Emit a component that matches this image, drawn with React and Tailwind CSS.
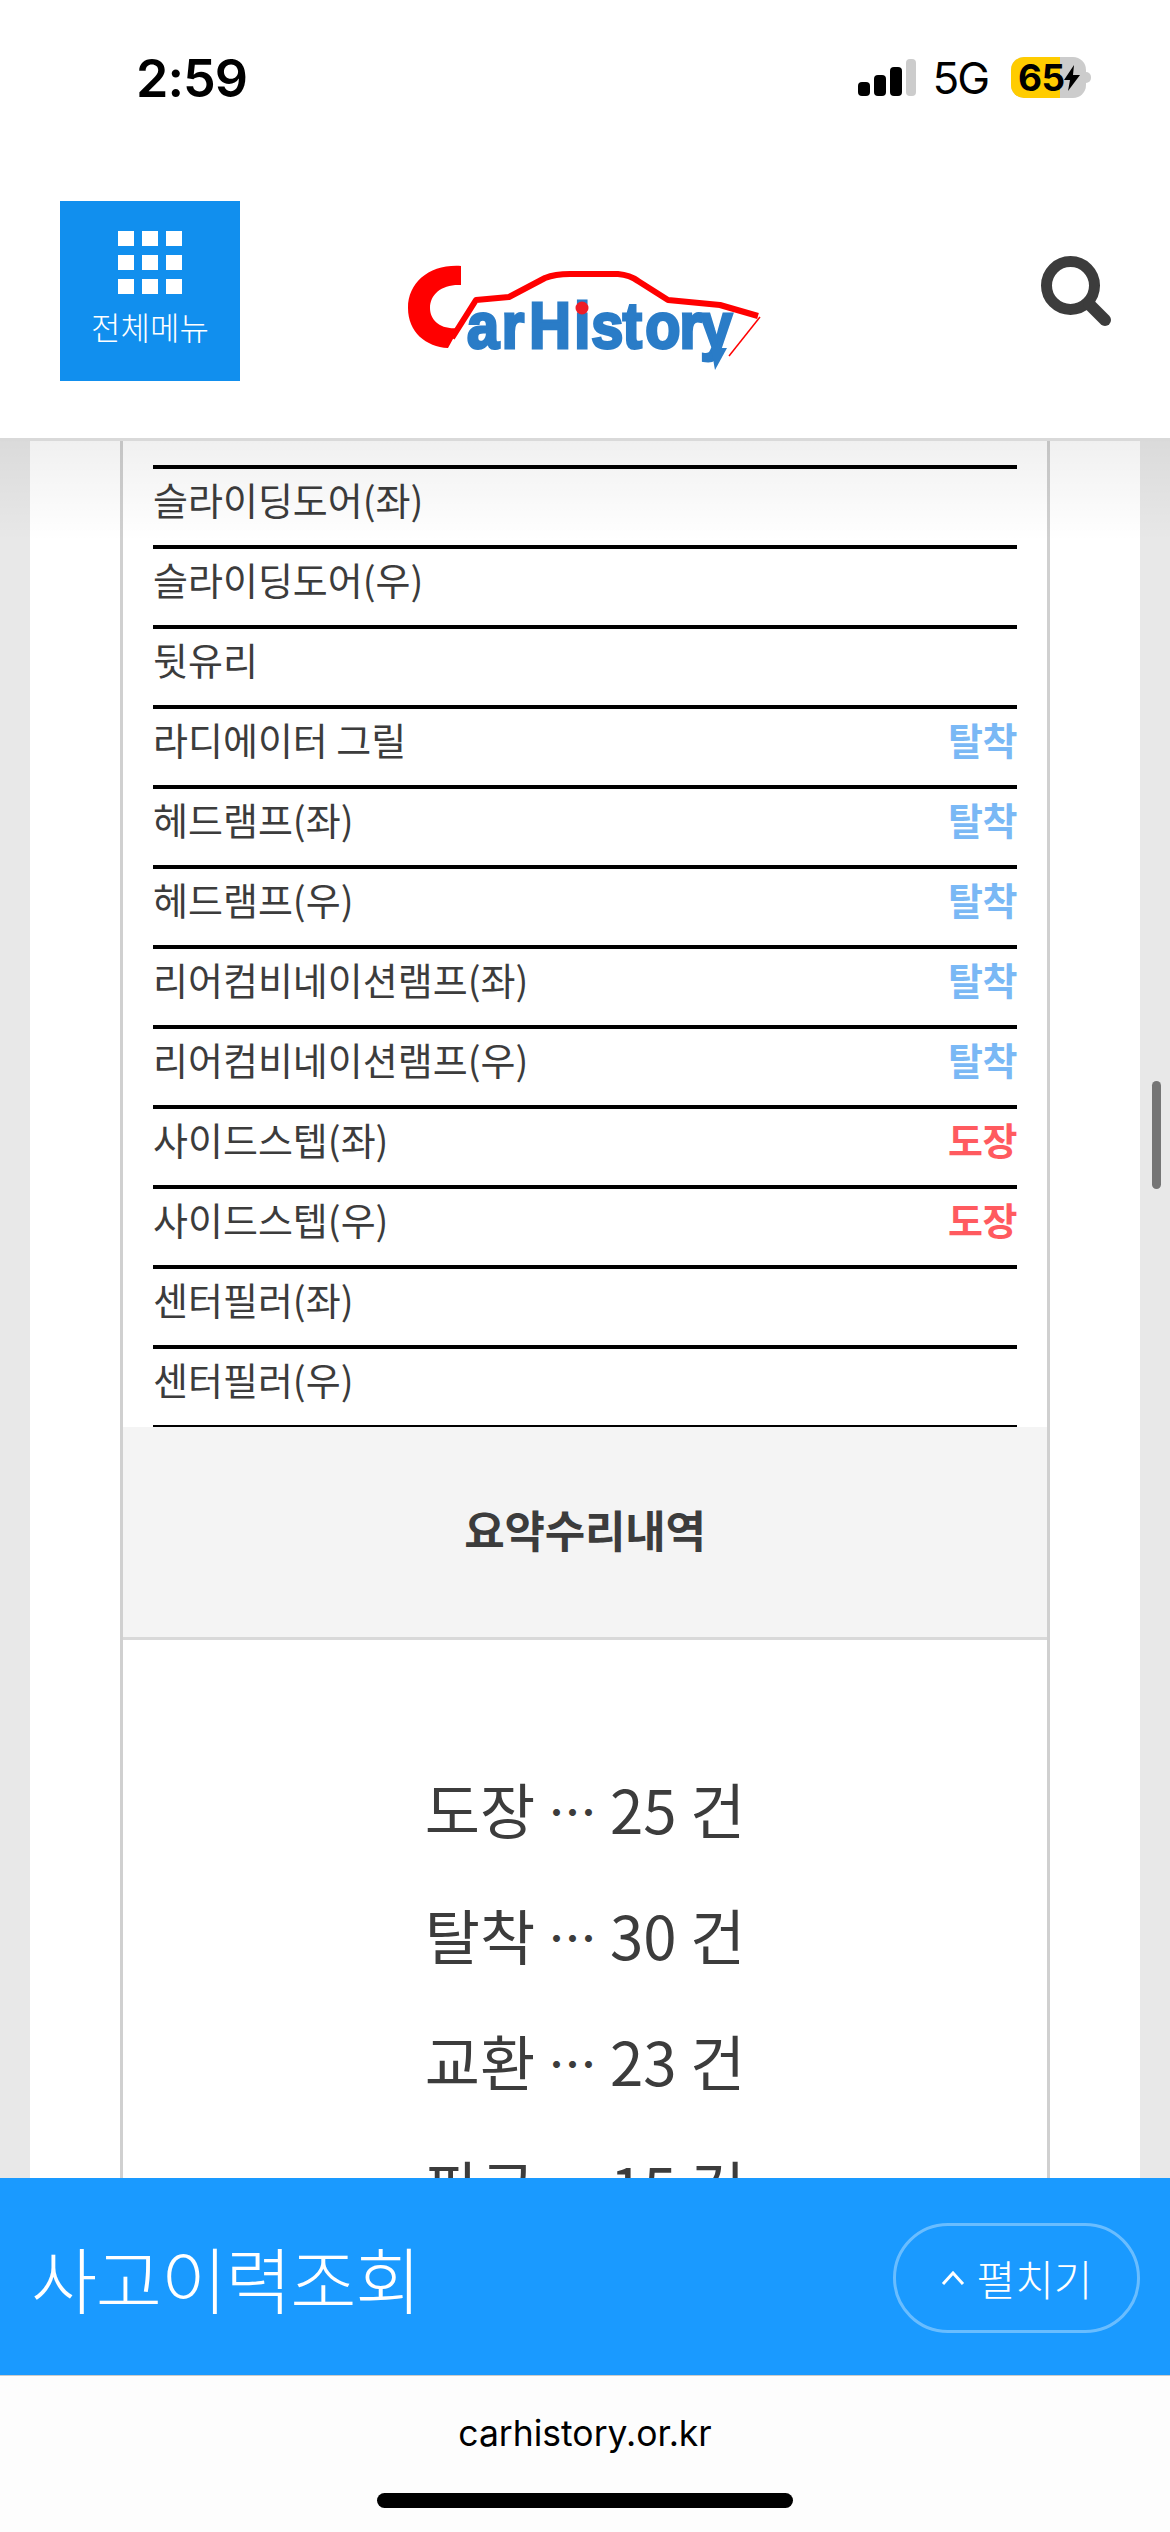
const rows = [
  ["슬라이딩도어(좌)", ""],
  ["슬라이딩도어(우)", ""],
  ["뒷유리", ""],
  ["라디에이터 그릴", "탈착"],
  ["헤드램프(좌)", "탈착"],
  ["헤드램프(우)", "탈착"],
  ["리어컴비네이션램프(좌)", "탈착"],
  ["리어컴비네이션램프(우)", "탈착"],
  ["사이드스텝(좌)", "도장"],
  ["사이드스텝(우)", "도장"],
  ["센터필러(좌)", ""],
  ["센터필러(우)", ""],
];

const summary = [
  ["도장", "25 건"],
  ["탈착", "30 건"],
  ["교환", "23 건"],
  ["판금", "15 건"],
];

function StatusBar() {
  return (
    <div className="flex h-[201px] items-start justify-between pl-[136px] pr-[79px] pt-[48px] font-['Inter',sans-serif] text-black">
      <span className="text-[52px] font-semibold leading-[62px] tracking-[-1px]">2:59</span>
      <div className="flex items-center pt-[9px]">
        <div className="flex items-end gap-[4px]">
          <div className="h-[14px] w-[12px] rounded-[4px] bg-black" />
          <div className="h-[21px] w-[12px] rounded-[4px] bg-black" />
          <div className="h-[29px] w-[12px] rounded-[4px] bg-black" />
          <div className="h-[37px] w-[10px] rounded-[4px] bg-[#cccccc]" />
        </div>
        <span className="ml-[16px] text-[44px] leading-[40px] tracking-[-2px]">5G</span>
        <div className="ml-[23px] flex items-center">
          <div className="relative flex h-[41px] w-[75px] overflow-hidden rounded-[13px] bg-[#cccccc]">
            <div className="h-full w-[49px] bg-[#ffcc00]" />
            <span className="absolute left-[7px] top-0 text-[37px] font-bold leading-[41px] tracking-[-0.5px]">65</span>
            <svg className="absolute left-[51px] top-[8px]" width="20" height="26" viewBox="0 0 20 26">
              <path d="M12 0 2 15h6L6 26l12-16h-7z" fill="#000" />
            </svg>
          </div>
          <div className="h-[11px] w-[5px] rounded-r-full bg-[#cccccc]" />
        </div>
      </div>
    </div>
  );
}

function MenuButton() {
  return (
    <div className="flex h-[180px] w-[180px] flex-col items-center bg-[#118fee] pt-[30px]">
      <div className="grid grid-cols-[16px_16px_16px] grid-rows-[15px_15px_15px] gap-x-[8px] gap-y-[9px]">
        {Array.from({ length: 9 }).map((_, i) => (
          <div key={i} className="bg-white" />
        ))}
      </div>
      <span className="mt-[12px] font-['Noto_Sans_CJK_KR',sans-serif] text-[32px] font-light leading-[40px] text-white">전체메뉴</span>
    </div>
  );
}

function Logo() {
  return (
    <svg width="400" height="150" viewBox="0 0 400 150" className="block blur-[0.6px]">
      <path d="M81 26 C50 24 28 42 28 68 C28 92 46 107 68 108 L79 88 C60 90 50 80 50 68 C50 54 62 44 81 45 Z" fill="#ff0000" />
      <path d="M72 98 L96 60 L129 57 L165 38 Q175 34 190 34 L238 34 Q250 35 258 41 L288 60 L340 65 L378 76" fill="none" stroke="#ff0000" strokeWidth="6" strokeLinejoin="round" />
      <path d="M380 77 L349 116" fill="none" stroke="#ff0000" strokeWidth="1.5" />
      <text
        transform="translate(88 108) scale(0.9 1)"
        x="-1 37.5 68 118 137 172 197 235 258"
        y="0"
        fontFamily="'Liberation Sans', sans-serif"
        fontWeight="700"
        fontSize="64"
        fill="#2a7cc7"
        stroke="#2a7cc7"
        strokeWidth="3"
      >
        arHistory
      </text>
      <path d="M331 108 L347 108 L335 130 Z" fill="#2a7cc7" />
      <circle cx="202" cy="68" r="6.5" fill="#ee1c25" />
    </svg>
  );
}

function SearchIcon() {
  return (
    <svg width="72" height="72" viewBox="0 0 72 72" className="block">
      <circle cx="30.5" cy="30.5" r="24" fill="none" stroke="#3c3c3c" strokeWidth="11" />
      <path d="M49 49 L65 65" fill="none" stroke="#3c3c3c" strokeWidth="12" strokeLinecap="round" />
    </svg>
  );
}

function Header() {
  return (
    <div className="h-[441px] shrink-0 border-b-[3px] border-[#d9d9d9] bg-white">
      <StatusBar />
      <div className="flex items-start pl-[60px] pr-[58px]">
        <MenuButton />
        <div className="ml-[140px] mt-[39px]">
          <Logo />
        </div>
        <div className="ml-auto mt-[54px]">
          <SearchIcon />
        </div>
      </div>
    </div>
  );
}

function Row({ name, status }) {
  const color = status === "도장" ? "text-[#ff5a5f]" : "text-[#7ab8f5]";
  return (
    <div className="flex h-[80px] items-center justify-between border-t-[4px] border-black pb-[16px]">
      <span className="font-['Noto_Sans_CJK_KR',sans-serif] text-[38px] font-normal leading-[50px] text-[#3c3c3c]">{name}</span>
      {status && <span className={`font-['Noto_Sans_CJK_KR',sans-serif] text-[38px] font-bold leading-[50px] tracking-[-0.5px] ${color}`}>{status}</span>}
    </div>
  );
}

function Content() {
  return (
    <div className="relative flex min-h-0 flex-1 overflow-hidden bg-[#e8e8e8]">
      <div className="mx-[30px] flex-1 bg-white px-[90px]">
        <div className="h-full border-x-[3px] border-[#d0d0d0]">
          <div className="h-[986px] overflow-hidden px-[30px] pt-[24px]">
            {rows.map(([n, s]) => (
              <Row key={n} name={n} status={s} />
            ))}
            <div className="h-[2px] bg-black" />
          </div>
          <div className="flex h-[213px] items-center justify-center border-b-[3px] border-[#d9d9d9] bg-[#f4f4f4] pb-[6px] font-['Noto_Sans_CJK_KR',sans-serif] text-[44px] font-bold tracking-[-0.2px] text-[#3c3c3c]">
            요약수리내역
          </div>
          <div className="flex flex-col items-center pt-[105px]">
            {summary.map(([label, count]) => (
              <div key={label} className="h-[126px] whitespace-pre font-['Noto_Sans_CJK_KR',sans-serif] text-[60px] font-normal leading-[126px] text-[#3c3c3c]">
                {label} <span className="relative -top-[4px] text-[48px] font-medium">…</span> {count}
              </div>
            ))}
          </div>
        </div>
      </div>
      <div className="pointer-events-none absolute inset-x-0 top-0 h-[100px] bg-gradient-to-b from-[#0000000f] to-transparent" />
      <div className="absolute left-[1152px] top-[640px] h-[108px] w-[9px] rounded-full bg-[#757575]" />
    </div>
  );
}

function BottomBar() {
  return (
    <div className="flex h-[198px] shrink-0 items-center justify-between border-b border-[#cccccc] bg-[#1a9aff] pl-[31px] pr-[30px]">
      <span className="font-['Noto_Sans_CJK_KR',sans-serif] text-[72px] font-light leading-[100px] tracking-[-1.4px] text-white">사고이력조회</span>
      <div className="mt-[3px] flex h-[110px] w-[247px] items-center justify-center gap-[12px] rounded-[55px] border-[3px] border-white/35">
        <svg width="24" height="14" viewBox="0 0 24 14">
          <path d="M2 13 12 2l10 11" fill="none" stroke="#fff" strokeWidth="3" />
        </svg>
        <span className="font-['Noto_Sans_CJK_KR',sans-serif] text-[42px] font-light leading-[50px] text-white">펼치기</span>
      </div>
    </div>
  );
}

function BrowserBar() {
  return (
    <div className="flex h-[156px] shrink-0 flex-col items-center bg-[#fdfdfd] pt-[34px]">
      <span className="font-['Inter',sans-serif] text-[35.5px] leading-[48px] text-black">carhistory.or.kr</span>
      <div className="mt-[35px] h-[15px] w-[416px] rounded-full bg-black" />
    </div>
  );
}

export default function App() {
  return (
    <div className="flex h-[2532px] w-[1170px] flex-col overflow-hidden bg-white">
      <Header />
      <Content />
      <BottomBar />
      <BrowserBar />
    </div>
  );
}
